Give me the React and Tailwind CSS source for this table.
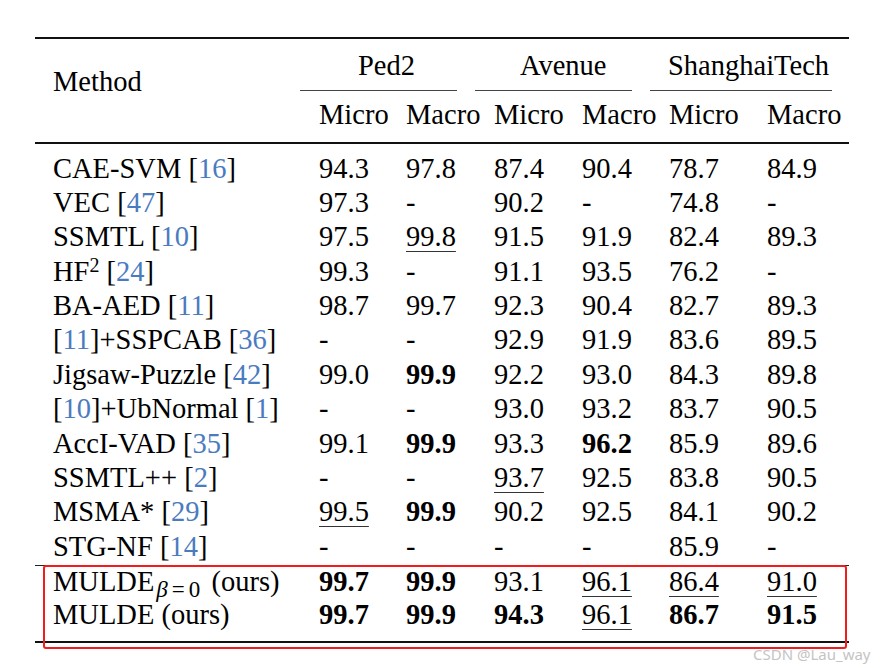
import React from "react";

// Results table: Micro / Macro AUC on Ped2, Avenue and ShanghaiTech
const Cite = ({ n }) => <span className="text-[#4b7bbf]">{n}</span>;

const Ref = ({ n }) => (
  <>
    [<Cite n={n} />]
  </>
);

const rows = [
  { method: <>CAE-SVM <Ref n="16" /></>, values: ["94.3", "97.8", "87.4", "90.4", "78.7", "84.9"] },
  { method: <>VEC <Ref n="47" /></>, values: ["97.3", "-", "90.2", "-", "74.8", "-"] },
  { method: <>SSMTL <Ref n="10" /></>, values: ["97.5", "u:99.8", "91.5", "91.9", "82.4", "89.3"] },
  {
    method: (
      <>
        HF<span className="relative -top-[9px] text-[20px] leading-none">2</span> <Ref n="24" />
      </>
    ),
    values: ["99.3", "-", "91.1", "93.5", "76.2", "-"],
  },
  { method: <>BA-AED <Ref n="11" /></>, values: ["98.7", "99.7", "92.3", "90.4", "82.7", "89.3"] },
  { method: <><Ref n="11" />+SSPCAB <Ref n="36" /></>, values: ["-", "-", "92.9", "91.9", "83.6", "89.5"] },
  { method: <>Jigsaw-Puzzle <Ref n="42" /></>, values: ["99.0", "b:99.9", "92.2", "93.0", "84.3", "89.8"] },
  { method: <><Ref n="10" />+UbNormal <Ref n="1" /></>, values: ["-", "-", "93.0", "93.2", "83.7", "90.5"] },
  { method: <>AccI-VAD <Ref n="35" /></>, values: ["99.1", "b:99.9", "93.3", "b:96.2", "85.9", "89.6"] },
  { method: <>SSMTL++ <Ref n="2" /></>, values: ["-", "-", "u:93.7", "92.5", "83.8", "90.5"] },
  { method: <>MSMA* <Ref n="29" /></>, values: ["u:99.5", "b:99.9", "90.2", "92.5", "84.1", "90.2"] },
  { method: <>STG-NF <Ref n="14" /></>, values: ["-", "-", "-", "-", "85.9", "-"] },
];

const ours = [
  {
    method: (
      <>
        MULDE
        <span className="relative top-[6px] ml-[2px] mr-[4px] text-[23px]">
          <i>β</i>
          <span className="mx-[4px]">=</span>0
        </span>{" "}
        (ours)
      </>
    ),
    values: ["b:99.7", "b:99.9", "93.1", "u:96.1", "u:86.4", "u:91.0"],
  },
  { method: <>MULDE (ours)</>, values: ["b:99.7", "b:99.9", "b:94.3", "u:96.1", "b:86.7", "b:91.5"] },
];

const cols = "grid grid-cols-[284px_87px_88px_88px_87px_98px_82px]";
const subCols = "grid grid-cols-[87px_88px_88px_87px_98px_82px]";

const Value = ({ v }) => {
  if (v.startsWith("b:")) return <span className="font-bold">{v.slice(2)}</span>;
  if (v.startsWith("u:"))
    return (
      <span className="underline decoration-1 decoration-[#333] underline-offset-[5px]">
        {v.slice(2)}
      </span>
    );
  return <span>{v}</span>;
};

const Row = ({ row, tall }) => (
  <div className={`${cols} ${tall ? "h-[34.4px] leading-[34.4px]" : "h-[32.5px] leading-[32.5px]"}`}>
    <div className="pl-[18px] whitespace-nowrap">{row.method}</div>
    {row.values.map((v, i) => (
      <div key={i} className="whitespace-nowrap">
        <Value v={v} />
      </div>
    ))}
  </div>
);

export default function App() {
  return (
    <div className="relative w-[882px] h-[668px] bg-white text-black font-serif text-[28.5px] overflow-hidden">
      <div className="ml-[35px] w-[814px] pt-[37px] font-[Liberation_Serif,Times_New_Roman,serif]">
        {/* top rule */}
        <div className="h-[2px] bg-[#111]" />

        {/* header */}
        <div className="flex h-[103px]">
          <div className="w-[284px] pl-[18px] pt-[26px] leading-[34px]">Method</div>
          <div className="flex flex-col">
            <div className={`${subCols} pt-[10px] leading-[34px] whitespace-nowrap`}>
              <div className="col-span-2 pl-[39px]">Ped2</div>
              <div className="col-span-2 pl-[26px]">Avenue</div>
              <div className="col-span-2 -ml-px">ShanghaiTech</div>
            </div>
            <div className="flex -ml-[19px] mt-[7px]">
              <div className="w-[157px] h-px bg-[#444]" />
              <div className="ml-[18px] w-[157px] h-px bg-[#444]" />
              <div className="ml-[18px] w-[182px] h-px bg-[#444]" />
            </div>
            <div className={`${subCols} mt-[7px] leading-[34px]`}>
              <div>Micro</div>
              <div>Macro</div>
              <div>Micro</div>
              <div>Macro</div>
              <div>Micro</div>
              <div>Macro</div>
            </div>
          </div>
        </div>

        {/* mid rule */}
        <div className="h-[1.5px] bg-[#111]" />

        {/* body */}
        <div className="pt-[8px]">
          {rows.map((r, i) => (
            <Row key={i} row={r} tall />
          ))}
        </div>

        {/* our rows with highlight box */}
        <div className="relative mt-[0.7px]">
          <div className="h-[1.5px] bg-[#222]" />
          {ours.map((r, i) => (
            <Row key={i} row={r} />
          ))}
          <div className="mt-[9.5px] h-[2.5px] bg-[#111]" />
          <div className="absolute left-[8px] top-0 w-[804px] h-[84px] border-[2.5px] border-[#f21c1c] rounded-[3px]" />
        </div>
      </div>

      {/* watermark */}
      <div className="absolute left-[753px] top-[647px] text-[15px] leading-none font-sans text-[#c4c4c4] whitespace-nowrap">
        CSDN @Lau_way
      </div>
    </div>
  );
}
